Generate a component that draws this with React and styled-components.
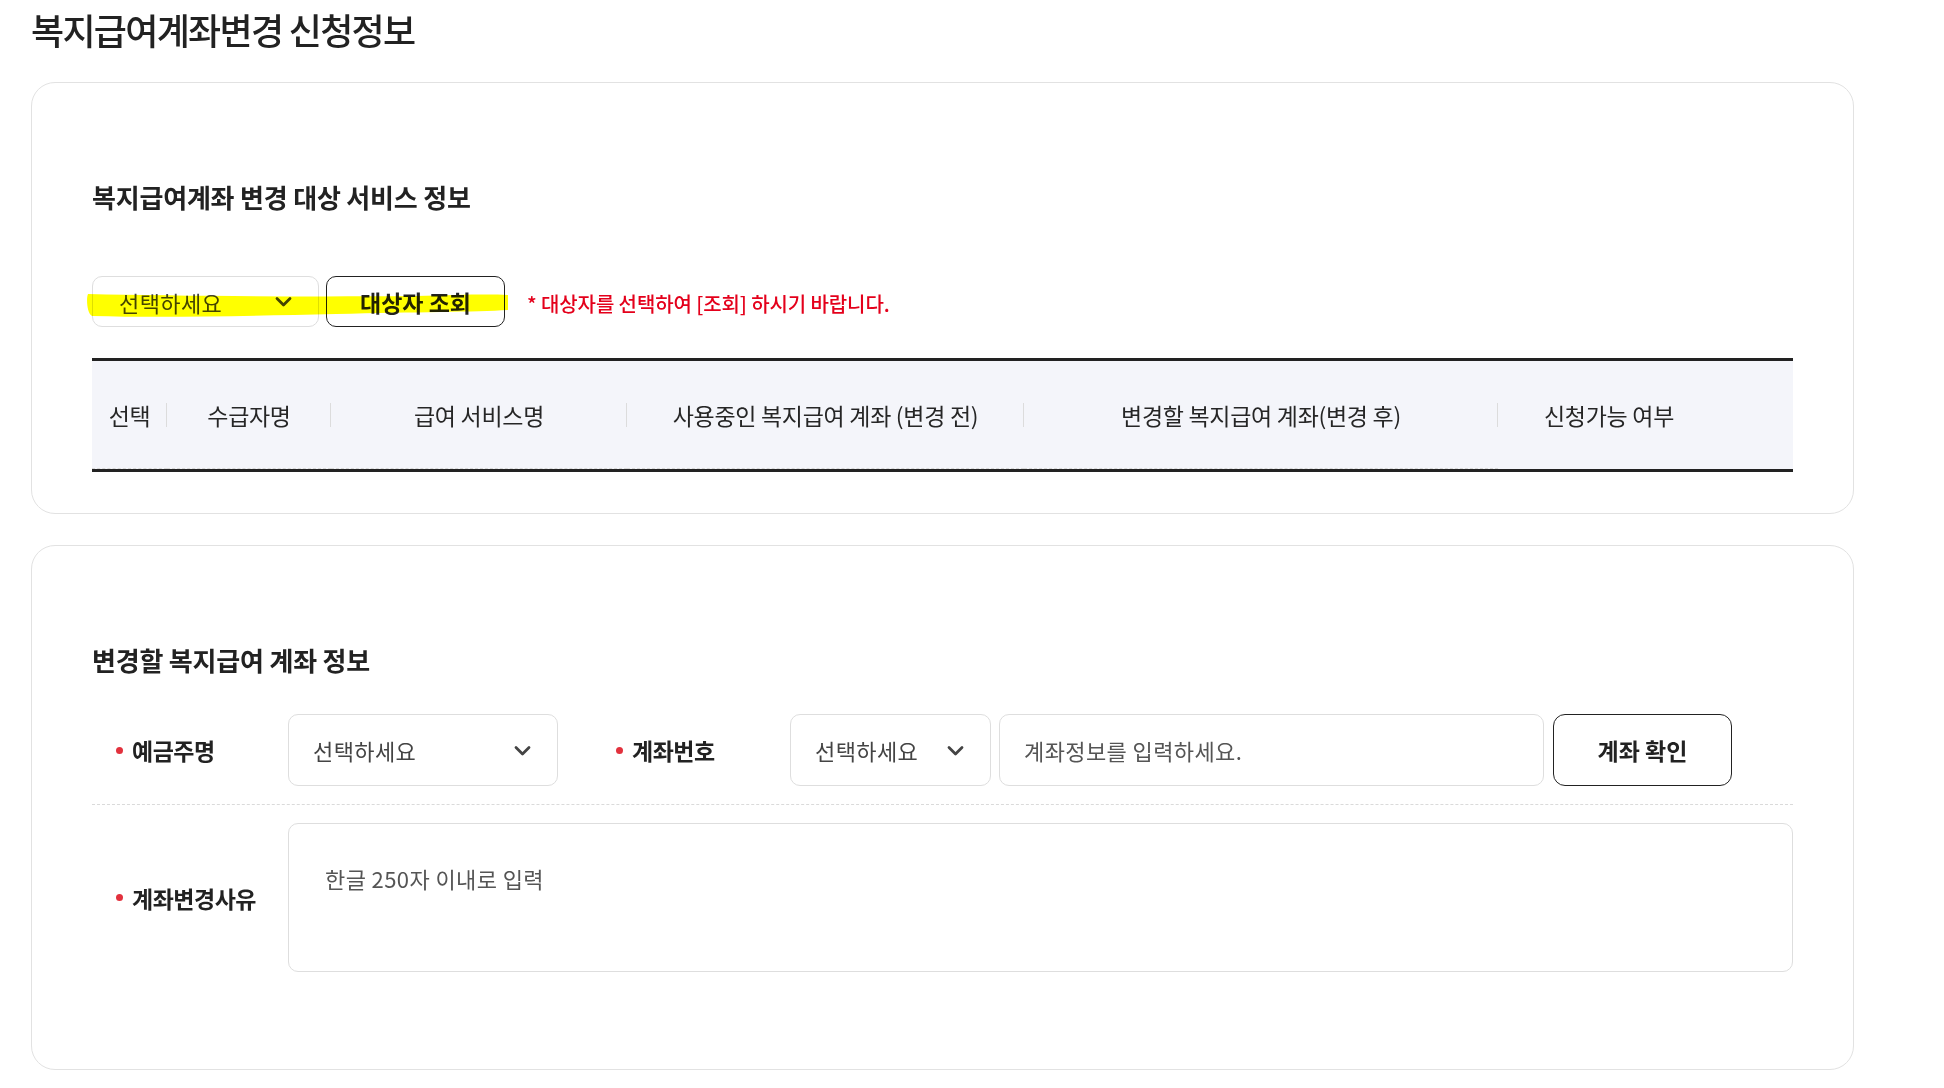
import React from 'react';
import styled, { createGlobalStyle } from 'styled-components';

const GlobalStyle = createGlobalStyle`
  body {
    margin: 0;
    background: #fff;
    font-family: "Noto Sans CJK KR", "Noto Sans", sans-serif;
    color: #222;
  }
`;

const Page = styled.div`
  padding: 7px 0 20px 31px;
`;

const PageTitle = styled.h1`
  margin: 0 0 31px;
  font-size: 36px;
  line-height: 44px;
  font-weight: 500;
  letter-spacing: -1.7px;
  color: #222;
`;

const Card = styled.section`
  width: 1823px;
  box-sizing: border-box;
  border: 1px solid #e2e2e2;
  border-radius: 24px;
  padding: 96px 60px ${(p) => p.$bottom || 41}px;
  margin-bottom: 31px;
`;

const SectionTitle = styled.h2`
  margin: 0 0 ${(p) => p.$gap || 61}px;
  font-size: 26px;
  line-height: 36px;
  font-weight: 700;
  letter-spacing: -0.2px;
  color: #222;
`;

const SearchRow = styled.div`
  position: relative;
  display: flex;
  align-items: center;
  height: 51px;
  margin-bottom: 31px;
`;

const Highlight = styled.svg`
  position: absolute;
  left: -6px;
  top: 12px;
  width: 424px;
  height: 34px;
  mix-blend-mode: multiply;
  pointer-events: none;
`;

const SelectBox = styled.div`
  box-sizing: border-box;
  display: flex;
  align-items: center;
  justify-content: space-between;
  width: ${(p) => p.$w}px;
  height: ${(p) => p.$h}px;
  padding: 0 ${(p) => p.$pr}px 0 ${(p) => p.$pl}px;
  border: 1px solid #dedede;
  border-radius: 10px;
  background: #fff;
  font-size: 22px;
  letter-spacing: 0.4px;
  color: #444;
  flex-shrink: 0;
`;

const OutlineButton = styled.button`
  box-sizing: border-box;
  width: ${(p) => p.$w}px;
  height: ${(p) => p.$h}px;
  margin-left: ${(p) => p.$ml || 0}px;
  border: 1.5px solid #222;
  border-radius: ${(p) => p.$r || 10}px;
  background: #fff;
  font-family: inherit;
  font-size: 23px;
  font-weight: 700;
  letter-spacing: 0;
  color: #222;
  flex-shrink: 0;
`;

const Notice = styled.span`
  margin: 4px 0 0 22px;
  font-size: 20px;
  font-weight: 500;
  letter-spacing: -0.1px;
  color: #e4001b;
`;

const HeadTable = styled.div`
  display: grid;
  grid-template-columns: 75px 164px 296px 397px 474px 222px 1fr;
  height: 108px;
  border-top: 3px solid #222;
  border-bottom: 3px solid #222;
  background: #f4f5fa;
`;

const HeadCell = styled.div`
  position: relative;
  display: flex;
  align-items: center;
  justify-content: center;
  font-size: 23px;
  letter-spacing: -0.3px;
  color: #262626;
  border-bottom: 1px dashed ${(p) => (p.$dash ? '#d8d8d8' : 'transparent')};

  &::after {
    content: '';
    display: ${(p) => (p.$sep ? 'block' : 'none')};
    position: absolute;
    right: 0;
    top: 42px;
    width: 1px;
    height: 24px;
    background: #dcdcdc;
  }
`;

const FormRow = styled.div`
  display: flex;
  align-items: center;
  padding: ${(p) => p.$pt}px 0 ${(p) => p.$pb}px;
  border-bottom: ${(p) => (p.$line ? '1px dashed #dadada' : 'none')};
`;

const Label = styled.div`
  box-sizing: border-box;
  display: flex;
  align-items: center;
  width: ${(p) => p.$w}px;
  padding-left: ${(p) => p.$pl}px;
  font-size: 23px;
  font-weight: 700;
  letter-spacing: -0.5px;
  color: #222;
  flex-shrink: 0;

  &::before {
    content: '';
    width: 7px;
    height: 7px;
    margin-right: 9px;
    border-radius: 50%;
    background: #e2313d;
  }
`;

const TextField = styled.div`
  box-sizing: border-box;
  display: flex;
  align-items: center;
  width: ${(p) => p.$w}px;
  height: 72px;
  margin-left: 8px;
  padding-left: 24px;
  border: 1px solid #dedede;
  border-radius: 10px;
  font-size: 22px;
  letter-spacing: 0.4px;
  color: #555;
`;

const TextArea = styled.div`
  box-sizing: border-box;
  flex: 1;
  height: 149px;
  padding: 39px 36px;
  border: 1px solid #dedede;
  border-radius: 10px;
  font-size: 22px;
  line-height: 30px;
  letter-spacing: 0.4px;
  color: #555;
`;

function Chevron() {
  return (
    <svg width="17" height="11" viewBox="0 0 17 11">
      <polyline points="2,2.5 8.5,9 15,2.5" fill="none" stroke="#444" strokeWidth="2.8" strokeLinecap="round" strokeLinejoin="round" />
    </svg>
  );
}

const headers = [
  '선택',
  '수급자명',
  '급여 서비스명',
  '사용중인 복지급여 계좌 (변경 전)',
  '변경할 복지급여 계좌(변경 후)',
  '신청가능 여부',
  '',
];

export default function App() {
  return (
    <>
      <GlobalStyle />
      <Page>
        <PageTitle>복지급여계좌변경 신청정보</PageTitle>

        <Card>
          <SectionTitle>복지급여계좌 변경 대상 서비스 정보</SectionTitle>
          <SearchRow>
            <SelectBox $w={227} $h={51} $pl={26} $pr={26}>
              선택하세요
              <Chevron />
            </SelectBox>
            <OutlineButton $w={179} $h={51} $ml={7}>대상자 조회</OutlineButton>
            <Notice>* 대상자를 선택하여 [조회] 하시기 바랍니다.</Notice>
            <Highlight viewBox="0 0 424 34" preserveAspectRatio="none">
              <path
                d="M2,6 C90,8 220,9 330,8 C370,7 400,6 422,7 L422,22 C390,24 330,24 250,26 C160,28 80,30 6,28 C1,26 0,10 2,6 Z"
                fill="#ffff00"
              />
            </Highlight>
          </SearchRow>
          <HeadTable>
            {headers.map((h, i) => (
              <HeadCell key={i} $sep={i < 5} $dash={i < 5}>
                {h}
              </HeadCell>
            ))}
          </HeadTable>
        </Card>

        <Card $bottom={79}>
          <SectionTitle $gap={36}>변경할 복지급여 계좌 정보</SectionTitle>
          <FormRow $pt={0} $pb={18} $line>
            <Label $w={196} $pl={24}>예금주명</Label>
            <SelectBox $w={270} $h={72} $pl={24} $pr={26}>
              선택하세요
              <Chevron />
            </SelectBox>
            <Label $w={232} $pl={58}>계좌번호</Label>
            <SelectBox $w={201} $h={72} $pl={24} $pr={26}>
              선택하세요
              <Chevron />
            </SelectBox>
            <TextField $w={545}>계좌정보를 입력하세요.</TextField>
            <OutlineButton $w={179} $h={72} $ml={9} $r={12}>계좌 확인</OutlineButton>
          </FormRow>
          <FormRow $pt={18} $pb={18}>
            <Label $w={196} $pl={24}>계좌변경사유</Label>
            <TextArea>한글 250자 이내로 입력</TextArea>
          </FormRow>
        </Card>
      </Page>
    </>
  );
}
